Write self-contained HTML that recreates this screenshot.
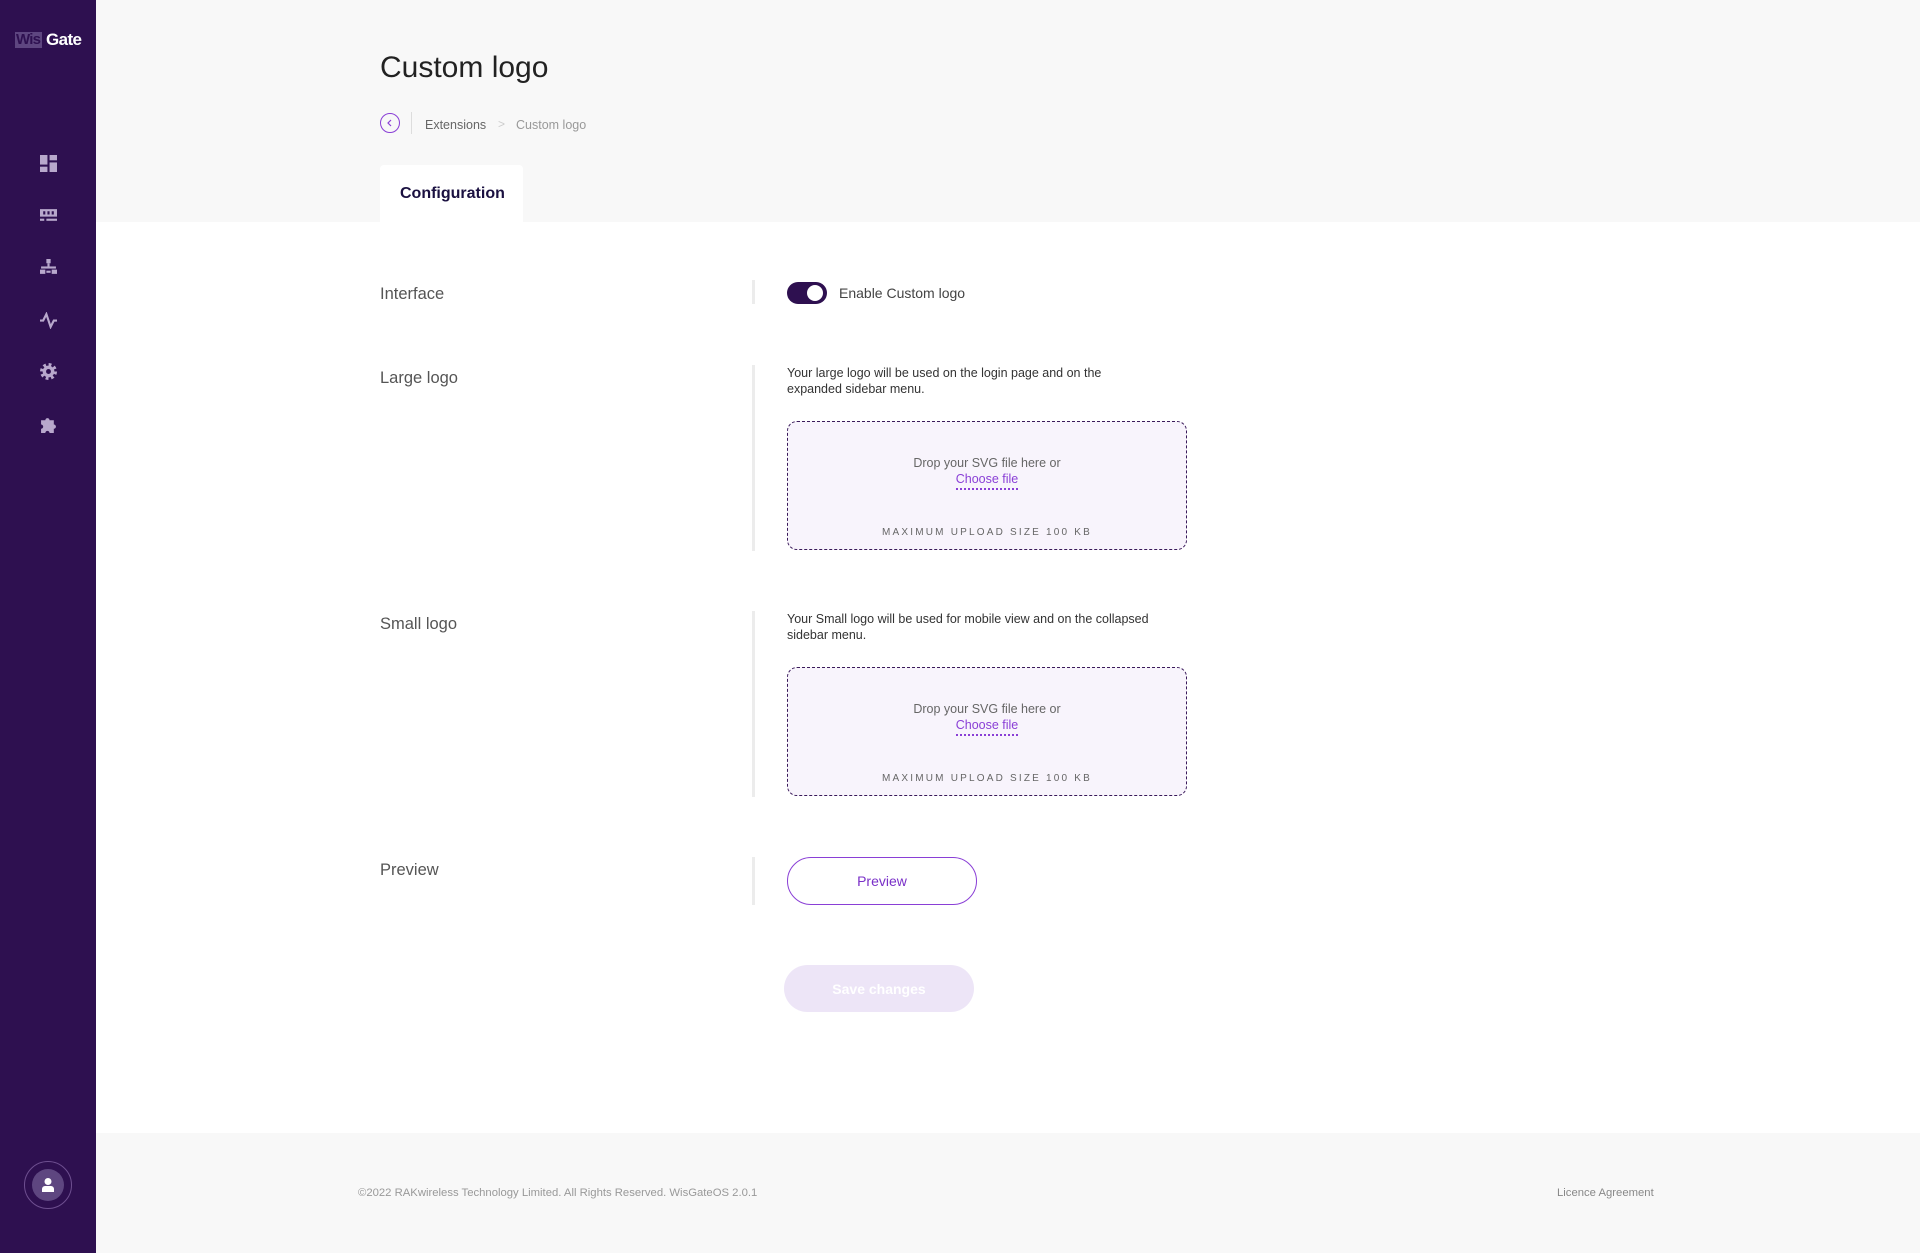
<!DOCTYPE html>
<html><head><meta charset="utf-8"><style>
*{margin:0;padding:0;box-sizing:border-box}
body{width:1920px;height:1253px;position:relative;font-family:"Liberation Sans",sans-serif;background:#fff;overflow:hidden}
.a{position:absolute}
.side{left:0;top:0;width:96px;height:1253px;background:#2e1050}
.top{left:96px;top:0;width:1824px;height:222px;background:#f8f8f8}
.foot{left:96px;top:1133px;width:1824px;height:120px;background:#f8f8f8}
.lbl{left:380px;font-size:16.5px;color:#555}
.div{left:752px;width:3px;background:#ececec}
.desc{left:787px;font-size:12.5px;line-height:16px;color:#333;width:420px;white-space:nowrap}
.box{left:787px;width:400px;height:129px;background:#f8f4fc;border:1.5px dashed #3a1a5a;border-radius:10px;text-align:center}
.box .d{position:absolute;top:34px;left:0;right:0;font-size:12.5px;color:#666}
.box .c{position:absolute;top:50px;left:0;right:0;font-size:12.5px;color:#8a3fd6}
.box .c span{border-bottom:2px dotted #8a3fd6;padding-bottom:2px}
.box .m{position:absolute;top:105px;left:0;right:0;font-size:10px;letter-spacing:2.2px;color:#666}
.ic{left:40px;width:17px;height:17px}
</style></head><body>
<div class="a side"></div>
<div class="a" style="left:15px;top:32px;width:27px;height:16px;background:#5e4680"></div>
<div class="a" style="left:16px;top:31px;font-size:15px;font-weight:bold;color:#2e1050;letter-spacing:-0.8px">Wis</div>
<div class="a" style="left:46px;top:30px;font-size:17px;font-weight:bold;color:#fff;letter-spacing:-0.6px">Gate</div>
<svg class="a ic" style="top:155px" viewBox="0 0 16 16" fill="#b8a8cc"><rect x="0" y="0" width="7" height="9"/><rect x="9" y="0" width="7" height="5"/><rect x="0" y="11" width="7" height="5"/><rect x="9" y="7" width="7" height="9"/></svg>
<svg class="a ic" style="top:207px" viewBox="0 0 16 16" fill="#b8a8cc"><path d="M0 2h16v7H0zM3 4v3h2V4zM7 4v3h2V4zM11 4v3h2V4z" fill-rule="evenodd"/><rect x="0" y="11" width="4" height="2"/><rect x="6" y="11" width="10" height="2"/></svg>
<svg class="a ic" style="top:259px" viewBox="0 0 16 16" fill="#b8a8cc"><rect x="6" y="0" width="4" height="4"/><rect x="7" y="4" width="2" height="4"/><rect x="1" y="7" width="14" height="2"/><rect x="0" y="10" width="5" height="4"/><rect x="11" y="10" width="5" height="4"/><rect x="6" y="11" width="4" height="2"/></svg>
<svg class="a ic" style="top:312px" viewBox="0 0 16 16" fill="none" stroke="#b8a8cc" stroke-width="2"><path d="M0 8h3l3-6 4 12 3-6h3"/></svg>
<svg class="a ic" style="top:363px" viewBox="0 0 16 16"><circle cx="8" cy="8" r="6" fill="none" stroke="#b8a8cc" stroke-width="4" stroke-dasharray="2.4 2.3"/><circle cx="8" cy="8" r="5.5" fill="#b8a8cc"/><circle cx="8" cy="8" r="2.3" fill="#2e1050"/></svg>
<svg class="a ic" style="top:416px" viewBox="0 0 16 16" fill="#b8a8cc"><path d="M1 4h4a2 2 0 1 1 4 0h4v4a2 2 0 1 1 0 4v4H9a2 2 0 1 0-4 0H1v-4a2 2 0 1 0 0-4z"/></svg>
<div class="a" style="left:24px;top:1161px;width:48px;height:48px;border-radius:50%;border:1px solid #6e4f90"></div>
<div class="a" style="left:32px;top:1169px;width:32px;height:32px;border-radius:50%;background:#5e4680"></div>
<svg class="a" style="left:40px;top:1177px" width="16" height="16" viewBox="0 0 16 16" fill="#fff"><circle cx="8" cy="4.5" r="3.5"/><path d="M2 15v-3a3 3 0 0 1 3-3h6a3 3 0 0 1 3 3v3z"/></svg>

<div class="a top"></div>
<div class="a" style="left:380px;top:51px;font-size:30px;color:#222">Custom logo</div>
<div class="a" style="left:380px;top:113px;width:20px;height:20px;border-radius:50%;border:1.5px solid #8a3fd6"></div>
<svg class="a" style="left:385px;top:118px" width="10" height="10" viewBox="0 0 10 10" fill="none" stroke="#8a3fd6" stroke-width="1.2"><path d="M6 2L3 5l3 3"/></svg>
<div class="a" style="left:411px;top:112px;width:1px;height:22px;background:#ddd"></div>
<div class="a" style="left:425px;top:118px;font-size:12.5px;color:#666">Extensions</div>
<div class="a" style="left:498px;top:117px;font-size:12px;color:#ccc">&gt;</div>
<div class="a" style="left:516px;top:118px;font-size:12.5px;color:#999">Custom logo</div>
<div class="a" style="left:380px;top:165px;width:143px;height:60px;background:#fff;border-radius:4px 4px 0 0"></div>
<div class="a" style="left:400px;top:185px;font-size:16px;font-weight:bold;color:#1a1040">Configuration</div>

<div class="a lbl" style="top:285px">Interface</div>
<div class="a div" style="top:280px;height:24px"></div>
<div class="a" style="left:787px;top:282px;width:40px;height:22px;border-radius:11px;background:#2e1050"></div>
<div class="a" style="left:807px;top:285px;width:16px;height:16px;border-radius:50%;background:#fff"></div>
<div class="a" style="left:839px;top:285px;font-size:14px;color:#444">Enable Custom logo</div>

<div class="a lbl" style="top:369px">Large logo</div>
<div class="a div" style="top:365px;height:186px"></div>
<div class="a desc" style="top:365px">Your large logo will be used on the login page and on the<br>expanded sidebar menu.</div>
<div class="a box" style="top:421px"><div class="d">Drop your SVG file here or</div><div class="c"><span>Choose file</span></div><div class="m">MAXIMUM UPLOAD SIZE 100 KB</div></div>

<div class="a lbl" style="top:615px">Small logo</div>
<div class="a div" style="top:611px;height:186px"></div>
<div class="a desc" style="top:611px">Your Small logo will be used for mobile view and on the collapsed<br>sidebar menu.</div>
<div class="a box" style="top:667px"><div class="d">Drop your SVG file here or</div><div class="c"><span>Choose file</span></div><div class="m">MAXIMUM UPLOAD SIZE 100 KB</div></div>

<div class="a lbl" style="top:861px">Preview</div>
<div class="a div" style="top:857px;height:48px"></div>
<div class="a" style="left:787px;top:857px;width:190px;height:48px;border:1.5px solid #8a3fd6;border-radius:24px;text-align:center;line-height:46px;font-size:14px;color:#7a30c8">Preview</div>
<div class="a" style="left:784px;top:965px;width:190px;height:47px;background:#ede5f7;border-radius:24px;text-align:center;line-height:48px;font-size:14px;font-weight:bold;color:#fff">Save changes</div>

<div class="a foot"></div>
<div class="a" style="left:358px;top:1187px;font-size:11.3px;color:#999">©2022 RAKwireless Technology Limited. All Rights Reserved. WisGateOS 2.0.1</div>
<div class="a" style="left:1557px;top:1187px;font-size:11.3px;color:#888">Licence Agreement</div>
</body></html>
